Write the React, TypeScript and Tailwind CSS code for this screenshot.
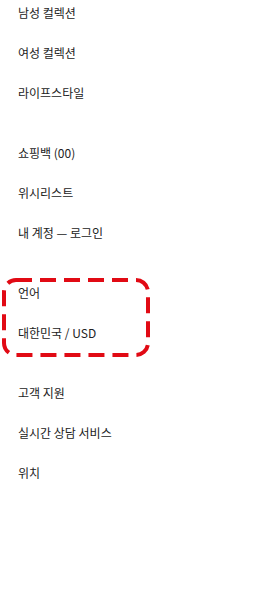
import React from 'react';

const groups: string[][] = [
  ['남성 컬렉션', '여성 컬렉션', '라이프스타일'],
  ['쇼핑백 (00)', '위시리스트', '내 계정 — 로그인'],
  ['언어', '대한민국 / USD'],
  ['고객 지원', '실시간 상담 서비스', '위치'],
];

const DashedFrame: React.FC = () => (
  <svg
    className="absolute left-[2px] top-[-2px] pointer-events-none"
    width="148"
    height="79"
    viewBox="0 0 148 79"
    fill="none"
  >
    <rect
      x="2"
      y="2"
      width="144"
      height="75"
      rx="12"
      stroke="#e10a14"
      strokeWidth="4"
      strokeDasharray="16 8"
    />
  </svg>
);

const App: React.FC = () => {
  return (
    <div
      className="min-h-screen w-full bg-white text-[#222] text-[12px]"
      style={{ fontFamily: '"Noto Sans CJK KR", "Noto Sans", sans-serif' }}
    >
      <nav className="flex flex-col gap-5">
        {groups.map((items, gi) => (
          <ul key={gi} className="relative flex flex-col">
            {items.map((label) => (
              <li key={label} className="pl-[18px] pt-[6px] pb-[20px] leading-[14px]">
                {label}
              </li>
            ))}
            {gi === 2 && <DashedFrame />}
          </ul>
        ))}
      </nav>
    </div>
  );
};

export default App;
